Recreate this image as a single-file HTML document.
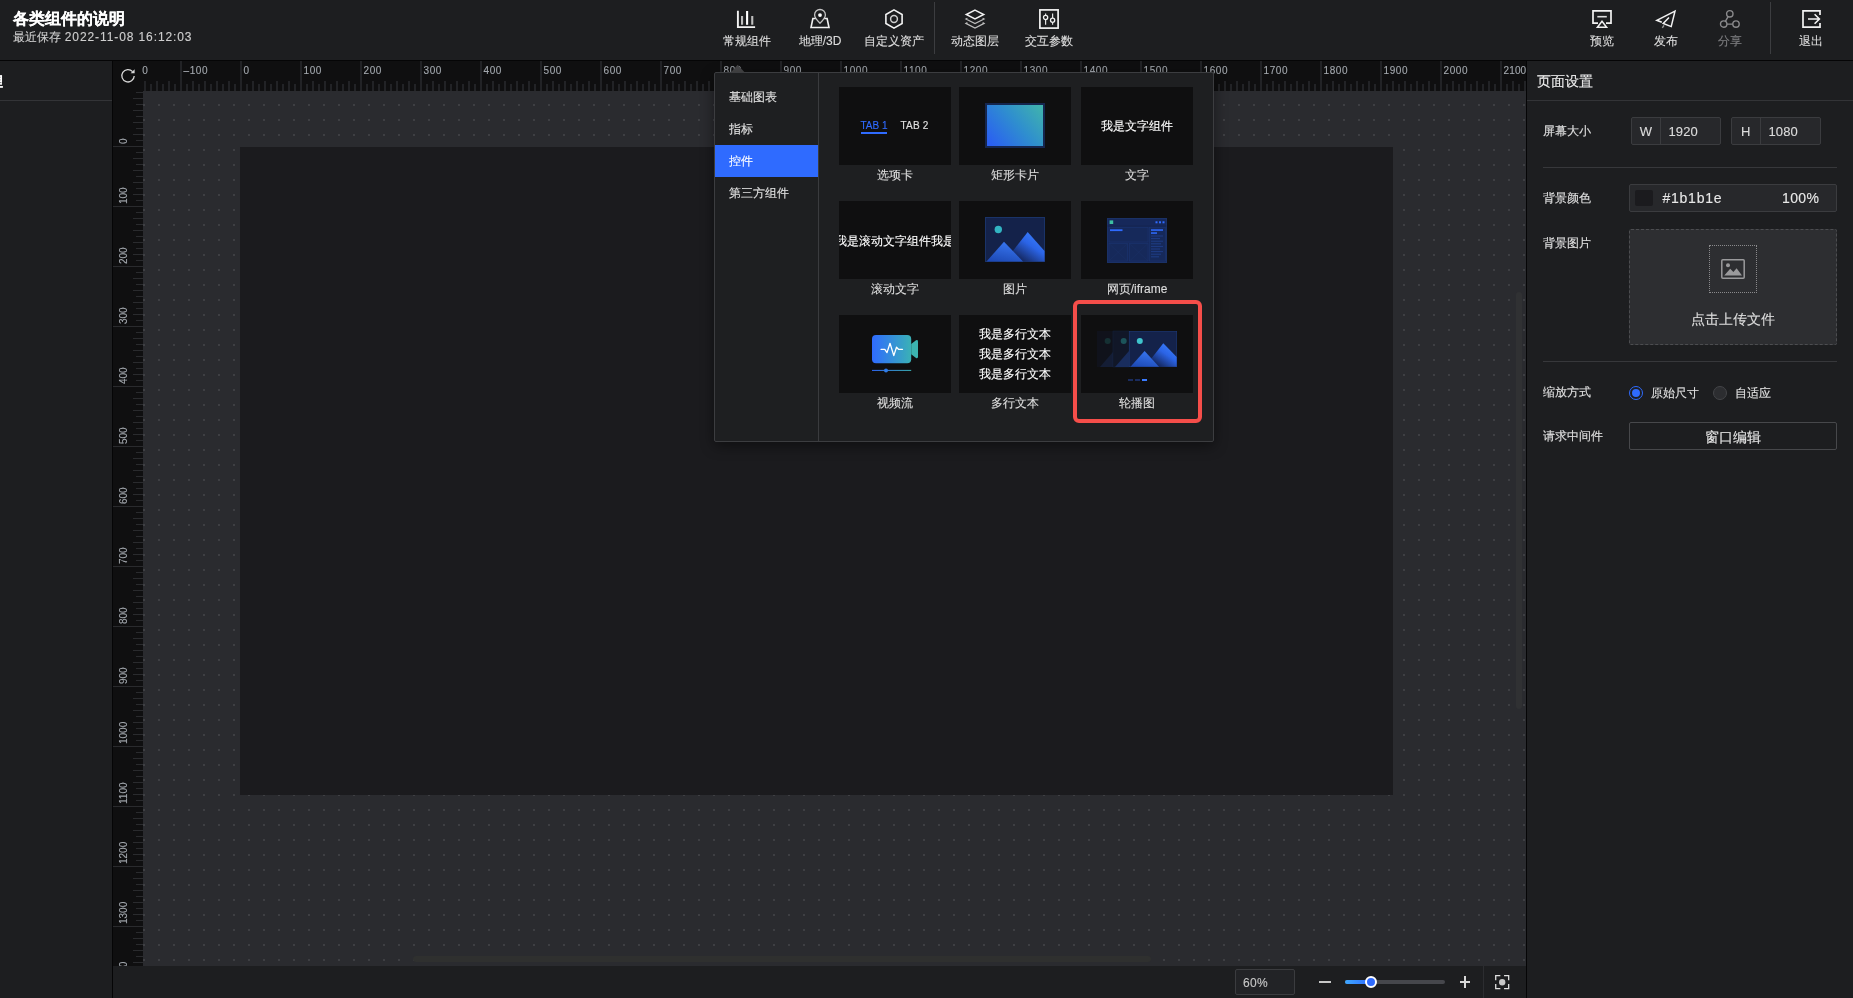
<!DOCTYPE html>
<html lang="zh"><head><meta charset="utf-8"><title>各类组件的说明</title><style>
*{box-sizing:border-box;margin:0;padding:0}
html,body{width:1853px;height:998px;overflow:hidden;background:#1d1e20}
body{position:relative;font-family:"Liberation Sans",sans-serif;color:#e6e6e6;font-size:12px;-webkit-text-stroke:.12px currentColor}
#app{position:absolute;left:0;top:0;width:1853px;height:998px;will-change:transform}
.a{position:absolute}
.t{position:absolute;white-space:nowrap;line-height:1}
.c{transform:translateX(-50%)}
svg{position:absolute;overflow:visible}
.ic{fill:none;stroke:#f2f2f2;stroke-width:1.5}
.lbl{position:absolute;white-space:nowrap;line-height:12px;font-size:12px;top:35px;transform:translateX(-50%);color:#dcdcdc}
.rl{position:absolute;top:65.5px;font-size:10px;line-height:10px;color:#a3a8ae;white-space:nowrap;letter-spacing:.55px}
.vl{position:absolute;left:117px;font-size:10px;line-height:10px;color:#a3a8ae;white-space:nowrap;transform-origin:0 0;transform:rotate(-90deg)}
.mi{position:absolute;left:715px;width:103px;height:32px;line-height:32px;padding-left:14px;font-size:12px;color:#e0e0e0;white-space:nowrap}
.card{position:absolute;width:112px;height:78px;background:#0f0f10;overflow:hidden}
.cl{position:absolute;width:112px;text-align:center;font-size:12px;line-height:12px;color:#dddddd;white-space:nowrap}
.fl{position:absolute;left:1543px;font-size:12px;line-height:12px;color:#e0e0e0;white-space:nowrap}
.box{position:absolute;border:1px solid #3b3c3f;background:#27282b;border-radius:2px}
</style></head><body><div id="app">
<div class="a" style="left:0;top:0;width:1853px;height:60px;background:#1d1e20"></div>
<div class="a" style="left:0;top:60px;width:1853px;height:1px;background:#050506"></div>
<div class="t" style="left:13px;top:10.5px;font-size:16px;line-height:16px;font-weight:bold;color:#fff">各类组件的说明</div>
<div class="t" style="left:13px;top:31px;font-size:12px;line-height:12px;color:#cfcfcf">最近保存</div><div class="t" style="left:64.8px;top:31px;font-size:12px;line-height:12px;color:#cfcfcf;letter-spacing:0.9px">2022-11-08 16:12:03</div>
<svg class="ic" style="left:736.0px;top:10px;" width="20" height="19" viewBox="0 0 20 19"><path d="M1.9 .8V17.1H19.1" stroke-width="1.9"/><path d="M6.05 6.1V14.8M16.25 6.1V14.8" stroke="#bdbdbd" stroke-width="2.1"/><path d="M11.1 1V14.8" stroke="#fff" stroke-width="2.1"/></svg>
<div class="lbl" style="left:746.5px">常规组件</div>
<svg class="ic" style="left:810.0px;top:9px;" width="20" height="20" viewBox="0 0 20 20"><path d="M10 14.2C6.7 10.9 4.6 8.6 4.6 5.9A5.4 5.4 0 0 1 15.4 5.9C15.4 8.6 13.3 10.9 10 14.2Z" stroke="#c4c4c4" stroke-width="1.3"/><circle cx="10" cy="6.1" r="1.9" fill="#fff" stroke="none"/><path d="M5.6 9.5H2.9L1 18.5H19L17.1 9.5H14.4" stroke-width="1.6"/></svg>
<div class="lbl" style="left:820px">地理/3D</div>
<svg class="ic" style="left:885.0px;top:9px;" width="18" height="20" viewBox="0 0 18 20"><path d="M9 .9L17.1 5.5V14.5L9 19.1L.9 14.5V5.5Z" stroke-width="1.6"/><circle cx="9" cy="10" r="3.4" stroke="#cfcfcf" stroke-width="1.5"/></svg>
<div class="lbl" style="left:894.3px">自定义资产</div>
<div class="a" style="left:934px;top:2px;width:1px;height:52px;background:#3c3d40"></div>
<svg class="ic" style="left:965.0px;top:9px;" width="20" height="20" viewBox="0 0 20 20"><path d="M10 1.1L18.7 5.5L10 9.9L1.3 5.5Z" stroke-width="1.5"/><path d="M2.4 9.2L.9 10L10 14.6L19.1 10L17.6 9.2M2.4 13.6L.9 14.4L10 19L19.1 14.4L17.6 13.6" stroke="#bcbcbc" stroke-width="1.2"/></svg>
<div class="lbl" style="left:974.8px">动态图层</div>
<svg class="ic" style="left:1039.0px;top:9px;" width="20" height="20" viewBox="0 0 20 20"><rect x=".9" y=".9" width="18.2" height="18.2" stroke-width="1.7"/><path d="M6.6 4.4V6.4M6.6 10.6V15.7M13.6 4.4V9.1M13.6 13.3V15.7" stroke="#e0e0e0" stroke-width="1.2"/><circle cx="6.6" cy="8.5" r="2.1" stroke-width="1.3"/><circle cx="13.6" cy="11.2" r="2.1" stroke-width="1.3"/></svg>
<div class="lbl" style="left:1049.2px">交互参数</div>
<svg class="ic" style="left:1592.0px;top:10px;" width="20" height="18" viewBox="0 0 20 18"><path d="M6 13.2H1V.9H19V13.2H14" stroke-width="1.7"/><path d="M5.3 6.7H14.8" stroke="#dcdcdc" stroke-width="1.6"/><path d="M10 11.3L14.6 17.2H5.4Z" stroke-width="1.5"/></svg>
<div class="lbl" style="left:1602px">预览</div>
<svg class="ic" style="left:1656.0px;top:10px;" width="20" height="18" viewBox="0 0 20 18"><path d="M13 7.5L7.2 13.4L15.2 16.6L19 1.1L.8 10.3L5.8 12.3" stroke-width="1.5"/><path d="M8 15.3L6.3 17.8" stroke="#9a9a9a" stroke-width="1.4"/></svg>
<div class="lbl" style="left:1666px">发布</div>
<svg class="ic" style="left:1720.0px;top:10px;" width="20" height="18" viewBox="0 0 20 18"><g stroke="#8a8a8c" stroke-width="1.4"><circle cx="9.8" cy="3.8" r="3.2"/><circle cx="3.7" cy="14.1" r="3.2"/><circle cx="16" cy="14.1" r="3.2"/><path d="M6.9 14.1H12.8M8.1 6.6L5.4 11.3"/></g></svg>
<div class="lbl" style="left:1730px;color:#7e7e80">分享</div>
<div class="a" style="left:1770px;top:2px;width:1px;height:52px;background:#3c3d40"></div>
<svg class="ic" style="left:1801.5px;top:10px;" width="19" height="18" viewBox="0 0 19 18"><path d="M18 5V.9H1V17.1H18V13" stroke-width="1.7"/><path d="M6 9H17.3M12.6 4.2L17.4 9L12.6 13.8" stroke-width="1.6"/></svg>
<div class="lbl" style="left:1811px">退出</div>
<div class="a" style="left:0;top:61px;width:112px;height:937px;background:#1d1e20"></div>
<div class="a" style="left:0;top:100px;width:112px;height:1px;background:#333437"></div>
<div class="a" style="left:0;top:61px;width:10px;height:39px;overflow:hidden"><div class="t" style="left:-10px;top:13.8px;font-size:13px;line-height:13px;font-weight:bold;color:#fff">理</div></div>
<div class="a" style="left:112px;top:61px;width:1px;height:937px;background:#050506"></div>
<div class="a" style="left:113px;top:61px;width:1413px;height:30px;background:#0f0f10"></div>
<div class="a" style="left:113px;top:91px;width:30px;height:875px;background:#0f0f10"></div>
<div class="a" style="left:143px;top:61px;width:1383px;height:30px;
background-image:linear-gradient(90deg,#222326 2px,transparent 2px),linear-gradient(90deg,#222326 2px,transparent 2px),linear-gradient(90deg,#222326 2px,transparent 2px);
background-size:60px 30px,12px 10px,12px 7px;background-position:37px 0,1px 20px,7px 23px;background-repeat:repeat-x"></div>
<div class="a" style="left:113px;top:91px;width:30px;height:875px;
background-image:linear-gradient(180deg,#2a2b2e 1px,transparent 1px),linear-gradient(180deg,#2a2b2e 1px,transparent 1px),linear-gradient(180deg,#2a2b2e 1px,transparent 1px);
background-size:30px 60px,10px 12px,7px 12px;background-position:0 55px,20px 7px,23px 1px;background-repeat:repeat-y"></div>
<div class="rl" style="left:142.3px">0</div>
<div class="rl" style="left:183.6px">–100</div>
<div class="rl" style="left:243.6px">0</div>
<div class="rl" style="left:303.6px">100</div>
<div class="rl" style="left:363.6px">200</div>
<div class="rl" style="left:423.6px">300</div>
<div class="rl" style="left:483.6px">400</div>
<div class="rl" style="left:543.6px">500</div>
<div class="rl" style="left:603.6px">600</div>
<div class="rl" style="left:663.6px">700</div>
<div class="rl" style="left:723.6px">800</div>
<div class="rl" style="left:783.6px">900</div>
<div class="rl" style="left:843.6px">1000</div>
<div class="rl" style="left:903.6px">1100</div>
<div class="rl" style="left:963.6px">1200</div>
<div class="rl" style="left:1023.6px">1300</div>
<div class="rl" style="left:1083.6px">1400</div>
<div class="rl" style="left:1143.6px">1500</div>
<div class="rl" style="left:1203.6px">1600</div>
<div class="rl" style="left:1263.6px">1700</div>
<div class="rl" style="left:1323.6px">1800</div>
<div class="rl" style="left:1383.6px">1900</div>
<div class="rl" style="left:1443.6px">2000</div>
<div class="rl" style="left:1503.6px;letter-spacing:.1px">2100</div>
<div class="a" style="left:113px;top:91px;width:30px;height:875px;overflow:hidden">
<div class="vl" style="left:6.2px;top:53px">0</div>
<div class="vl" style="left:6.2px;top:113px">100</div>
<div class="vl" style="left:6.2px;top:173px">200</div>
<div class="vl" style="left:6.2px;top:233px">300</div>
<div class="vl" style="left:6.2px;top:293px">400</div>
<div class="vl" style="left:6.2px;top:353px">500</div>
<div class="vl" style="left:6.2px;top:413px">600</div>
<div class="vl" style="left:6.2px;top:473px">700</div>
<div class="vl" style="left:6.2px;top:533px">800</div>
<div class="vl" style="left:6.2px;top:593px">900</div>
<div class="vl" style="left:6.2px;top:653px">1000</div>
<div class="vl" style="left:6.2px;top:713px">1100</div>
<div class="vl" style="left:6.2px;top:773px">1200</div>
<div class="vl" style="left:6.2px;top:833px">1300</div>
<div class="vl" style="left:6.2px;top:893px">1400</div>
</div>
<svg style="left:119px;top:67px" width="18" height="18" viewBox="0 0 18 18"><path d="M13.6 4.6A6.2 6.2 0 1 0 15.2 9" fill="none" stroke="#d8d8d8" stroke-width="1.3"/><path d="M15.6 2.2V6.2H11.6Z" fill="#d8d8d8"/></svg>
<svg style="left:143px;top:91px" width="1383" height="875"><defs><pattern id="dp" x="0" y="13" width="15" height="15" patternUnits="userSpaceOnUse"><rect width="2" height="2" fill="#3e3f43"/></pattern></defs><rect width="1383" height="875" fill="#2a2b2f"/><rect width="1383" height="875" fill="url(#dp)"/></svg>
<div class="a" style="left:240px;top:147px;width:1153px;height:648px;background:#1b1b1e"></div>
<div class="a" style="left:413px;top:956px;width:738px;height:6px;border-radius:3px;background:#2f302f"></div>
<div class="a" style="left:1516px;top:292px;width:6px;height:417px;border-radius:3px;background:#303133"></div>
<div class="a" style="left:1526px;top:61px;width:1px;height:937px;background:#050506"></div>
<div class="a" style="left:113px;top:966px;width:1413px;height:32px;background:#1d1e20"></div>
<div class="box" style="left:1235px;top:969px;width:60px;height:26px;background:#222326"></div>
<div class="t" style="left:1243px;top:976.8px;font-size:12px;line-height:12px;color:#c8c8c8;letter-spacing:.3px">60%</div>
<div class="a" style="left:1319px;top:981px;width:12px;height:2px;background:#c8c8c8"></div>
<div class="a" style="left:1345px;top:980px;width:100px;height:4px;border-radius:2px;background:#46474c"></div>
<div class="a" style="left:1345px;top:980px;width:26px;height:4px;border-radius:2px;background:linear-gradient(90deg,#3fa8ff,#2f6bff)"></div>
<div class="a" style="left:1365px;top:976px;width:12px;height:12px;border-radius:6px;background:#2f6bff;border:2px solid #fff"></div>
<div class="a" style="left:1460px;top:981px;width:10px;height:2px;background:#d8d8d8"></div><div class="a" style="left:1464px;top:976px;width:2px;height:12px;background:#d8d8d8"></div>
<div class="a" style="left:1483px;top:966px;width:1px;height:32px;background:#2c2d30"></div>
<svg style="left:1494.8px;top:974.9px" width="14.4" height="14.4" viewBox="0 0 14 14"><path d="M.7 5.2V.7H5.2M8.8 .7H13.3V5.2M13.3 8.8V13.3H8.8M5.2 13.3H.7V8.8" fill="none" stroke="#e0e0e0" stroke-width="1.25"/><circle cx="7" cy="7" r="3.1" fill="#c8c8c8"/></svg>
<div class="a" style="left:1527px;top:61px;width:326px;height:937px;background:#1d1e20"></div>
<div class="t" style="left:1537px;top:74px;font-size:14px;line-height:14px;color:#ededed">页面设置</div>
<div class="a" style="left:1527px;top:100px;width:326px;height:1px;background:#333437"></div>
<div class="fl" style="top:125px">屏幕大小</div>
<div class="box" style="left:1631px;top:117px;width:90px;height:28px"></div><div class="a" style="left:1660px;top:118px;width:1px;height:26px;background:#3b3c3f"></div>
<div class="t c" style="left:1645.8px;top:124.5px;font-size:13px;line-height:13px;color:#dcdcdc">W</div><div class="t" style="left:1668.5px;top:124.5px;font-size:13px;line-height:13px;color:#dcdcdc;letter-spacing:.1px">1920</div>
<div class="box" style="left:1731px;top:117px;width:90px;height:28px"></div><div class="a" style="left:1760px;top:118px;width:1px;height:26px;background:#3b3c3f"></div>
<div class="t c" style="left:1745.8px;top:124.5px;font-size:13px;line-height:13px;color:#dcdcdc">H</div><div class="t" style="left:1768.5px;top:124.5px;font-size:13px;line-height:13px;color:#dcdcdc;letter-spacing:.1px">1080</div>
<div class="a" style="left:1543px;top:167px;width:294px;height:1px;background:#37383b"></div>
<div class="fl" style="top:192px">背景颜色</div>
<div class="box" style="left:1629px;top:184px;width:208px;height:28px"></div>
<div class="a" style="left:1635px;top:190px;width:18px;height:16px;border-radius:2px;background:#1b1b1e"></div>
<div class="t" style="left:1662.5px;top:191px;font-size:14px;line-height:14px;color:#e8e8e8;letter-spacing:.75px">#1b1b1e</div>
<div class="t" style="left:1782px;top:191px;font-size:14px;line-height:14px;color:#e8e8e8;letter-spacing:.35px">100%</div>
<div class="fl" style="top:237px">背景图片</div>
<div class="a" style="left:1629px;top:229px;width:208px;height:116px;border:1px dashed #4c4d50;background:#2d2e31;border-radius:2px"></div>
<div class="a" style="left:1709px;top:245px;width:48px;height:48px;border:1px dotted #8a8a8c"></div>
<svg style="left:1721px;top:259px" width="24" height="20" viewBox="0 0 24 20"><rect x=".8" y=".8" width="22.4" height="18.4" rx="1" fill="none" stroke="#9a9a9c" stroke-width="1.5"/><circle cx="7" cy="6.3" r="2" fill="#9a9a9c"/><path d="M3.2 16.5L9.2 9.8L12.4 13L15.6 9.2L21 16.5Z" fill="#9a9a9c"/></svg>
<div class="t c" style="left:1733px;top:312px;font-size:14px;line-height:14px;color:#dedede">点击上传文件</div>
<div class="a" style="left:1543px;top:361px;width:294px;height:1px;background:#37383b"></div>
<div class="fl" style="top:386px">缩放方式</div>
<div class="a" style="left:1629px;top:386px;width:14px;height:14px;border-radius:7px;border:1.5px solid #2f6bff;background:#1d1e20"></div><div class="a" style="left:1632px;top:389px;width:8px;height:8px;border-radius:4px;background:#2f6bff"></div>
<div class="t" style="left:1651px;top:387.4px;font-size:12px;line-height:12px;color:#e0e0e0">原始尺寸</div>
<div class="a" style="left:1713px;top:386px;width:14px;height:14px;border-radius:7px;border:1px solid #444548;background:#2c2d30"></div>
<div class="t" style="left:1735px;top:387.4px;font-size:12px;line-height:12px;color:#e0e0e0">自适应</div>
<div class="fl" style="top:429.5px">请求中间件</div>
<div class="a" style="left:1629px;top:422px;width:208px;height:28px;border:1px solid #47484b;border-radius:2px"></div>
<div class="t c" style="left:1733.3px;top:430px;font-size:14px;line-height:14px;color:#e6e6e6">窗口编辑</div>
<svg style="left:730px;top:64px" width="16" height="9" viewBox="0 0 16 9"><path d="M.3 9L7.7 .8L15.2 9Z" fill="#464648"/></svg>
<div class="a" style="left:714px;top:72px;width:500px;height:370px;background:#1e1f21;border:1px solid #3c3d40;border-radius:2px;box-shadow:0 4px 14px rgba(0,0,0,.45)"></div>
<div class="a" style="left:818px;top:73px;width:1px;height:368px;background:#3a3b3e"></div>
<div class="mi" style="top:81px">基础图表</div>
<div class="mi" style="top:113px">指标</div>
<div class="mi" style="top:145px;background:#2f6bff;color:#fff">控件</div>
<div class="mi" style="top:177px">第三方组件</div>
<div class="card" style="left:839px;top:87px"><div class="t" style="left:21.5px;top:33.5px;font-size:10px;line-height:10px;color:#2f6bff">TAB 1</div><div class="a" style="left:22px;top:45px;width:26px;height:2px;background:#2f6bff"></div><div class="t" style="left:61.5px;top:33.5px;font-size:10px;line-height:10px;color:#e0e0e0;letter-spacing:.2px">TAB 2</div></div>
<div class="cl" style="left:839px;top:169px">选项卡</div>
<div class="card" style="left:959px;top:87px"><div class="a" style="left:26px;top:16px;width:60px;height:45px;border:2px solid #15264f;background:linear-gradient(50deg,#2a5ff2 5%,#2f8fce 55%,#41b5ab 100%)"></div></div>
<div class="cl" style="left:959px;top:169px">矩形卡片</div>
<div class="card" style="left:1081px;top:87px"><div class="t" style="left:0;width:112px;text-align:center;top:33px;font-size:12px;line-height:12px;color:#fff">我是文字组件</div></div>
<div class="cl" style="left:1081px;top:169px">文字</div>
<div class="card" style="left:839px;top:201px"><div class="t" style="left:-4.5px;top:33.5px;font-size:12px;line-height:12px;color:#fff">我是滚动文字组件我是</div></div>
<div class="cl" style="left:839px;top:283px">滚动文字</div>
<div class="card" style="left:959px;top:201px"><svg style="left:26px;top:16px" width="60" height="45" viewBox="0 0 60 45"><defs><linearGradient id="mg" x1=".9" y1=".1" x2=".25" y2=".95"><stop offset="0" stop-color="#3b80ff"/><stop offset=".45" stop-color="#2b64e6"/><stop offset="1" stop-color="#14265c"/></linearGradient><linearGradient id="mg2" x1=".6" y1="0" x2=".2" y2="1"><stop offset="0" stop-color="#3877f2"/><stop offset="1" stop-color="#1d49b4"/></linearGradient></defs><rect x=".5" y=".5" width="59" height="44" fill="#14224a" stroke="#1a3368"/><circle cx="13.3" cy="12.5" r="3.7" fill="#32b4c2"/><path d="M27 35L42.7 15L59.5 34V44.5H38Z" fill="url(#mg)"/><path d="M1.5 44.5L19 24.8L38 44.5Z" fill="url(#mg2)"/></svg></div>
<div class="cl" style="left:959px;top:283px">图片</div>
<div class="card" style="left:1081px;top:201px"><svg style="left:26px;top:17px" width="60" height="45" viewBox="0 0 60 45"><rect x=".5" y=".5" width="59" height="44" fill="#16285a" stroke="#1a3166"/><path d="M.5 8H59.5" stroke="#142451"/><rect x="2.6" y="2.4" width="3.6" height="3.6" fill="#3dbfa2"/><rect x="48.5" y="3.3" width="2" height="2" fill="#2f6bff"/><rect x="52" y="3.3" width="2" height="2" fill="#2f6bff"/><rect x="55.5" y="3.3" width="2" height="2" fill="#2f6bff"/><rect x="2" y="9.5" width="39" height="14.5" fill="#16295a" stroke="#1b3470" stroke-width=".6"/><rect x="3" y="11.3" width="12.5" height="1.8" fill="#2f6bff"/><rect x="2" y="25.5" width="18.5" height="17.5" fill="#16295a" stroke="#1b3470" stroke-width=".6"/><rect x="22.5" y="25.5" width="18.5" height="17.5" fill="#16295a" stroke="#1b3470" stroke-width=".6"/><path d="M2 25.5L20.5 43M20.5 25.5L2 43M22.5 25.5L41 43M41 25.5L22.5 43" stroke="#1a3066" stroke-width=".5"/><rect x="42.5" y="9.5" width="16" height="33.5" fill="#16295a" stroke="#1b3470" stroke-width=".6"/><rect x="44" y="11.3" width="12" height="1.5" fill="#2f6bff"/><rect x="44" y="14.3" width="6" height="1.5" fill="#2f6bff"/><path d="M44 18H56M44 20.6H53M44 23.2H56M44 25.8H54M44 28.4H56M44 31H53M44 33.6H56M44 36.2H54M44 38.8H52" stroke="#1f3f8a" stroke-width=".9"/></svg></div>
<div class="cl" style="left:1081px;top:283px">网页/iframe</div>
<div class="card" style="left:839px;top:315px"><svg style="left:33px;top:20px" width="46" height="38" viewBox="0 0 46 38"><defs><linearGradient id="vg" x1="0" y1="0" x2="1" y2="0"><stop offset="0" stop-color="#2f6bff"/><stop offset="1" stop-color="#3ab1b6"/></linearGradient></defs><rect x="0" y="0" width="39.2" height="28.3" rx="4" fill="url(#vg)"/><path d="M39.2 9L44 5.3Q46 4.6 46 6.6V21.7Q46 23.7 44 23L39.2 19.3Z" fill="#3cb4b0"/><path d="M9 14.3H12.8L15 17.6L18 8.3L21.8 20.6L24.5 12.2L26.5 14.3H30.5" fill="none" stroke="#fff" stroke-width="1.3" stroke-linejoin="round" stroke-linecap="round"/><rect x="0" y="34.9" width="39.2" height="1" fill="url(#vg)"/><circle cx="14" cy="35.4" r="2" fill="#2f7be8"/></svg></div>
<div class="cl" style="left:839px;top:397px">视频流</div>
<div class="card" style="left:959px;top:315px"><div class="t" style="left:0;width:112px;text-align:center;top:9px;font-size:12px;line-height:20px;color:#fff;white-space:normal">我是多行文本<br>我是多行文本<br>我是多行文本</div></div>
<div class="cl" style="left:959px;top:397px">多行文本</div>
<div class="card" style="left:1081px;top:315px"><svg style="left:16px;top:16px" width="80" height="52" viewBox="0 0 80 52"><defs><linearGradient id="cg" x1=".9" y1=".1" x2=".25" y2=".95"><stop offset="0" stop-color="#3b80ff"/><stop offset=".45" stop-color="#2b64e6"/><stop offset="1" stop-color="#14265c"/></linearGradient><linearGradient id="cg2" x1=".6" y1="0" x2=".2" y2="1"><stop offset="0" stop-color="#3877f2"/><stop offset="1" stop-color="#1d49b4"/></linearGradient><linearGradient id="f1" x1="0" y1="0" x2="1" y2="0"><stop offset="0" stop-color="#0f0f10" stop-opacity=".0"/><stop offset="1" stop-color="#0f0f10" stop-opacity="0"/></linearGradient></defs>
<g opacity=".2"><rect x="0" y="0" width="16" height="36" fill="#14224a"/><circle cx="10.7" cy="10" r="3" fill="#2fb3c0"/><path d="M3 36L16 21V36Z" fill="#2857c8"/></g>
<g opacity=".42"><rect x="16" y="0" width="16" height="36" fill="#14224a" stroke="#1b3873" stroke-width=".5"/><circle cx="26.7" cy="10" r="3" fill="#2fb3c0"/><path d="M18 36L32 20V36Z" fill="#2857c8"/></g>
<rect x="32.3" y=".3" width="47.4" height="35.4" fill="#14224a" stroke="#1d3b7a" stroke-width=".6"/><circle cx="42.8" cy="10" r="3" fill="#3fc4cc"/><path d="M54 28L66.3 12.2L79.7 26V35.7H62Z" fill="url(#cg)"/><path d="M33.5 35.7L47.6 20L62 35.7Z" fill="url(#cg2)"/>
<rect x="31" y="48" width="5" height="2" fill="#1a2c5e"/><rect x="38" y="48" width="5" height="2" fill="#1a2c5e"/><rect x="45" y="48" width="5" height="2" fill="#3a7bff"/></svg></div>
<div class="cl" style="left:1081px;top:397px">轮播图</div>
<div class="a" style="left:1073px;top:300px;width:129px;height:123px;border:4px solid #f54e4a;border-radius:6px"></div>
</div></body></html>
